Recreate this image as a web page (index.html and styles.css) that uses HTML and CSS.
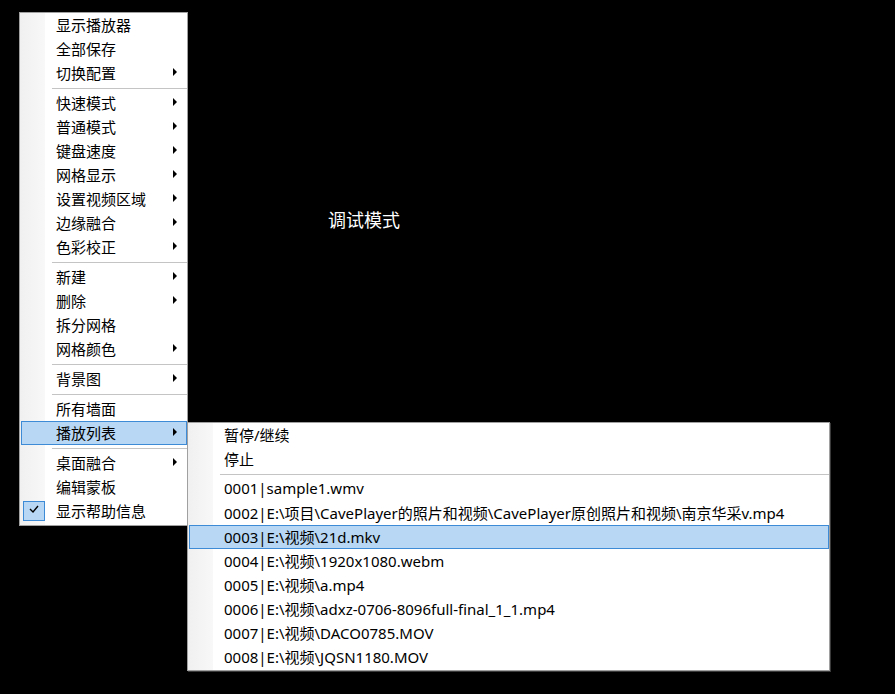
FILE: index.html
```html
<!DOCTYPE html>
<html lang="zh-CN">
<head>
  <meta charset="UTF-8" />
  <title>调试模式</title>
  <link rel="stylesheet" href="styles.css">
</head>
<body>
  <div class="stage">
    <div class="mode-label">调试模式</div>

    <div class="menu main-menu">
      <div class="item">显示播放器</div>
      <div class="item">全部保存</div>
      <div class="item has-sub">切换配置<span class="arrow"></span></div>
      <div class="sep"></div>
      <div class="item has-sub">快速模式<span class="arrow"></span></div>
      <div class="item has-sub">普通模式<span class="arrow"></span></div>
      <div class="item has-sub">键盘速度<span class="arrow"></span></div>
      <div class="item has-sub">网格显示<span class="arrow"></span></div>
      <div class="item has-sub">设置视频区域<span class="arrow"></span></div>
      <div class="item has-sub">边缘融合<span class="arrow"></span></div>
      <div class="item has-sub">色彩校正<span class="arrow"></span></div>
      <div class="sep"></div>
      <div class="item has-sub">新建<span class="arrow"></span></div>
      <div class="item has-sub">删除<span class="arrow"></span></div>
      <div class="item">拆分网格</div>
      <div class="item has-sub">网格颜色<span class="arrow"></span></div>
      <div class="sep"></div>
      <div class="item has-sub">背景图<span class="arrow"></span></div>
      <div class="sep"></div>
      <div class="item">所有墙面</div>
      <div class="item has-sub active">播放列表<span class="arrow"></span></div>
      <div class="sep"></div>
      <div class="item has-sub">桌面融合<span class="arrow"></span></div>
      <div class="item">编辑蒙板</div>
      <div class="item checked">
        <span class="check">
          <svg width="10" height="8" viewBox="0 0 10 8"><polyline points="1,4 4,7 9,1" fill="none" stroke="#000" stroke-width="1.4"/></svg>
        </span>
        显示帮助信息
      </div>
    </div>

    <div class="menu sub-menu">
      <div class="item">暂停/继续</div>
      <div class="item">停止</div>
      <div class="sep"></div>
      <div class="item">0001|sample1.wmv</div>
      <div class="item">0002|E:\项目\CavePlayer的照片和视频\CavePlayer原创照片和视频\南京华采v.mp4</div>
      <div class="item active">0003|E:\视频\21d.mkv</div>
      <div class="item">0004|E:\视频\1920x1080.webm</div>
      <div class="item">0005|E:\视频\a.mp4</div>
      <div class="item">0006|E:\视频\adxz-0706-8096full-final_1_1.mp4</div>
      <div class="item">0007|E:\视频\DACO0785.MOV</div>
      <div class="item">0008|E:\视频\JQSN1180.MOV</div>
    </div>
  </div>
</body>
</html>
```

FILE: styles.css
```css
body { margin: 0; background: #000; font-family: "Noto Sans", "Noto Sans CJK SC", sans-serif; font-size: 15px; color: #000; }
.stage { position: relative; width: 895px; height: 694px; overflow: hidden; }

.mode-label { position: absolute; left: 328px; top: 206px; color: #fff; font-size: 18px; font-family: "Noto Sans CJK SC", sans-serif; }

.menu { position: absolute; background: #fff; border: 1px solid #a0a0a0; padding: 0 0 2px; box-sizing: border-box; }
.menu::before { content: ""; position: absolute; left: 0; top: 0; bottom: 0; width: 25px; background: linear-gradient(to right, #f0f0f0, #f8f8f8); }
.main-menu { left: 19px; top: 12px; width: 169px; height: 514px; }
.sub-menu { left: 187px; top: 422px; width: 643px; height: 249px; box-shadow: 1px 1px 0 #3a3a3a; }

.item { position: relative; display: flex; align-items: center; height: 24px; padding: 0 0 2px 34px; white-space: nowrap; box-sizing: border-box; border: 1px solid transparent; margin-left: 1px; }
.item.active { background: #b7d7f4; border-color: #3d8ad7; }
.arrow { margin-left: auto; margin-right: 9px; width: 0; height: 0; border-top: 4px solid transparent; border-bottom: 4px solid transparent; border-left: 4px solid #000; }

.sep { position: relative; height: 6px; margin-left: 32px; }
.sep::after { content: ""; position: absolute; left: 0; right: 0; top: 3px; border-top: 1px solid #c4c4c4; }

.check { position: absolute; left: 1px; top: 1px; width: 22px; height: 20px; box-sizing: border-box; background: #b7d7f4; border: 1px solid #3d8ad7; display: flex; align-items: center; justify-content: center; }
.check svg { margin-top: -4px; }
```
